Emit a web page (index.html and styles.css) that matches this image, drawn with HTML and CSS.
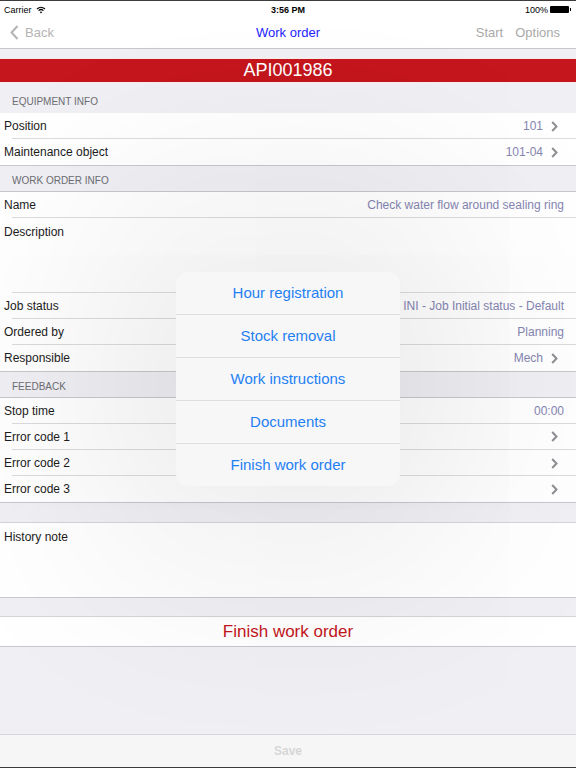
FILE: index.html
```html
<!DOCTYPE html>
<html lang="en">
<head>
    <meta charset="UTF-8" />
    <title>Work order</title>
    <link rel="stylesheet" href="styles.css">
</head>
<body>

<!-- status bar -->
<div class="statusbar">
    <div class="sb-left">Carrier
        <svg width="10" height="8" viewBox="0 0 10 8"><path d="M1 3 Q5 -0.5 9 3" fill="none" stroke="#000" stroke-width="1.2"/><path d="M2.6 4.6 Q5 2.4 7.4 4.6" fill="none" stroke="#000" stroke-width="1.2"/><path d="M5 7.5 L3.8 6 Q5 5 6.2 6 Z" fill="#000"/></svg>
    </div>
    <div class="sb-time">3:56 PM</div>
    <div class="sb-right">100%
        <span class="battery"><span class="battery-tip"></span></span>
    </div>
</div>

<!-- navigation bar -->
<div class="navbar">
    <div class="nav-back">
        <svg width="9" height="15" viewBox="0 0 9 15"><polyline points="7.5,1 1.5,7.5 7.5,14" fill="none" stroke="#b4b4b4" stroke-width="2"/></svg>
        Back
    </div>
    <div class="nav-title">Work order</div>
    <div class="nav-actions"><span>Start</span><span>Options</span></div>
</div>

<div class="content">
    <div class="gap-small"></div>
    <div class="order-band">API001986</div>

    <div class="section-head first">EQUIPMENT INFO</div>
    <div class="group">
        <div class="row"><span class="label">Position</span><span class="value">101</span><span class="chev"></span></div>
        <div class="row"><span class="label">Maintenance object</span><span class="value">101-04</span><span class="chev"></span></div>
    </div>

    <div class="section-head">WORK ORDER INFO</div>
    <div class="group">
        <div class="row"><span class="label">Name</span><span class="value">Check water flow around sealing ring</span></div>
        <div class="row tall"><span class="label">Description</span></div>
        <div class="row"><span class="label">Job status</span><span class="value">INI - Job Initial status - Default</span></div>
        <div class="row"><span class="label">Ordered by</span><span class="value">Planning</span></div>
        <div class="row"><span class="label">Responsible</span><span class="value">Mech</span><span class="chev"></span></div>
    </div>

    <div class="section-head">FEEDBACK</div>
    <div class="group">
        <div class="row"><span class="label">Stop time</span><span class="value">00:00</span></div>
        <div class="row"><span class="label">Error code 1</span><span class="chev"></span></div>
        <div class="row"><span class="label">Error code 2</span><span class="chev"></span></div>
        <div class="row"><span class="label">Error code 3</span><span class="chev"></span></div>
    </div>

    <div class="gap"></div>
    <div class="group boxed">
        <div class="row tall note"><span class="label">History note</span></div>
    </div>

    <div class="gap narrow"></div>
    <div class="group boxed">
        <div class="finish-btn">Finish work order</div>
    </div>

    <div class="filler"></div>
</div>

<div class="toolbar">Save</div>

<!-- options popover -->
<div class="popover">
    <div class="pop-item">Hour registration</div>
    <div class="pop-item">Stock removal</div>
    <div class="pop-item">Work instructions</div>
    <div class="pop-item">Documents</div>
    <div class="pop-item">Finish work order</div>
</div>

<script>
// chevrons for the rows that open a picker
document.querySelectorAll('.chev').forEach(function (el) {
    el.innerHTML = '<svg width="7" height="11" viewBox="0 0 7 11"><polyline points="1.2,1 5.5,5.5 1.2,10" fill="none" stroke="#8e8e93" stroke-width="2"/></svg>';
});
</script>

</body>
</html>
```

FILE: styles.css
```css
html, body {
    margin: 0;
    padding: 0;
}
body {
    font-family: "Liberation Sans", Arial, sans-serif;
    width: 576px;
    height: 768px;
    background: #efeff4;
    border-top: 1px solid #3c3c3c;
    border-bottom: 1px solid #3c3c3c;
    box-sizing: border-box;
    display: flex;
    flex-direction: column;
    overflow: hidden;
    position: relative;
}

/* status bar */
.statusbar {
    height: 18px;
    background: #fff;
    display: flex;
    align-items: center;
    justify-content: space-between;
    padding: 0 4px 1px;
    box-sizing: border-box;
    font-size: 9px;
    color: #000;
}
.sb-left, .sb-right {
    width: 120px;
    display: flex;
    align-items: center;
    gap: 4px;
}
.sb-right {
    justify-content: flex-end;
    gap: 2px;
}
.sb-time {
    font-weight: bold;
}
.battery {
    width: 19px;
    height: 7px;
    background: #000;
    border-radius: 1px;
    position: relative;
    margin-right: 3px;
}
.battery-tip {
    position: absolute;
    right: -2px;
    top: 2px;
    width: 1px;
    height: 3px;
    background: #000;
}

/* navigation */
.navbar {
    height: 27px;
    background: #fff;
    border-bottom: 1px solid #c8c7cc;
    display: flex;
    align-items: center;
    justify-content: space-between;
    padding: 0 16px 2px 10px;
    font-size: 13px;
    position: relative;
}
.nav-back {
    display: flex;
    align-items: center;
    gap: 6px;
    color: #b4b4b4;
}
.nav-title {
    position: absolute;
    left: 0;
    right: 0;
    text-align: center;
    color: #2424ff;
    pointer-events: none;
}
.nav-actions {
    display: flex;
    gap: 12px;
    color: #a9a9a9;
}

.content {
    flex: 1;
    display: flex;
    flex-direction: column;
}
.gap-small {
    height: 9px;
}
.order-band {
    height: 23px;
    line-height: 23px;
    background: #c4161c;
    border-top: 1px solid #fbeaea;
    border-bottom: 1px solid #fbeaea;
    color: #fff;
    text-align: center;
    font-size: 18px;
}

.section-head {
    height: 26px;
    padding: 0 12px 5px;
    display: flex;
    align-items: flex-end;
    box-sizing: border-box;
    font-size: 10px;
    color: #6d6d72;
    border-bottom: 1px solid #c8c7cc;
}
.section-head.first {
    height: 30px;
    border-bottom: none;
    padding-bottom: 6px;
}
.group {
    background: #fff;
    border-bottom: 1px solid #c8c7cc;
}
.group.boxed {
    border-top: 1px solid #d4d4d8;
}
.row {
    height: 25.25px;
    display: flex;
    align-items: center;
    padding: 1px 12px 0 4px;
    box-sizing: border-box;
    font-size: 12px;
    color: #1c1c1c;
    position: relative;
}
.row + .row {
    height: 26.25px;
    border-top: 1px solid transparent;
}
/* inset separator between rows */
.row + .row::before {
    content: "";
    position: absolute;
    top: -1px;
    left: 12px;
    right: 0;
    height: 1px;
    background: #dcdce0;
}
.row.tall {
    height: 75px;
    align-items: flex-start;
    padding-top: 7px;
}
.row.tall.note {
    height: 74px;
}
.label {
    flex: 1;
}
.value {
    color: #8585b2;
}
.chev {
    width: 7px;
    margin-left: 8px;
    margin-right: 6px;
    display: flex;
    align-items: center;
}

.gap {
    height: 19px;
}
.gap.narrow {
    height: 18px;
}
.finish-btn {
    height: 29px;
    line-height: 29px;
    text-align: center;
    color: #c4161c;
    font-size: 17px;
}
.filler {
    flex: 1;
}
.toolbar {
    height: 32px;
    line-height: 32px;
    background: #f6f6f6;
    border-top: 1px solid #d6d6da;
    text-align: center;
    font-size: 12px;
    font-weight: bold;
    color: #d6d6d6;
}

/* popover with its soft dimming halo */
.popover {
    position: absolute;
    left: 176px;
    top: 271px;
    width: 224px;
    background: #f7f7f7;
    border-radius: 12px;
    box-shadow: 0 0 220px 70px rgba(0, 0, 0, 0.09);
    overflow: hidden;
}
.pop-item {
    height: 42px;
    line-height: 42px;
    text-align: center;
    font-size: 15px;
    color: #1f80f4;
}
.pop-item + .pop-item {
    border-top: 1px solid #dedede;
}
```
